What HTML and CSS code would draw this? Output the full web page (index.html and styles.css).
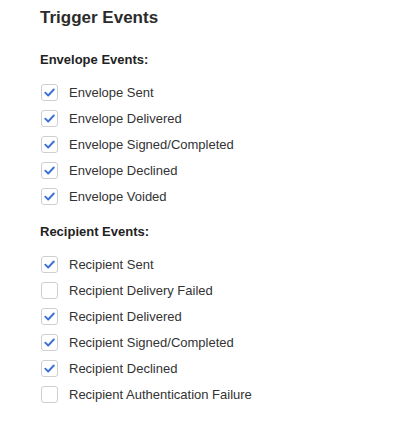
FILE: index.html
```html
<!DOCTYPE html>
<html lang="en">
<head>
  <meta charset="UTF-8" />
  <meta name="viewport" content="width=device-width, initial-scale=1.0" />
  <title>Trigger Events</title>
  <link rel="stylesheet" href="styles.css">
</head>
<body>
  <div class="panel">
    <h2 class="title">Trigger Events</h2>

    <p class="group-label">Envelope Events:</p>
    <ul class="events">
      <li class="event checked"><span class="box"><svg viewBox="0 0 16 16"><path d="M3.5 8.2 L6.6 11.2 L12.6 4.8" /></svg></span>Envelope Sent</li>
      <li class="event checked"><span class="box"><svg viewBox="0 0 16 16"><path d="M3.5 8.2 L6.6 11.2 L12.6 4.8" /></svg></span>Envelope Delivered</li>
      <li class="event checked"><span class="box"><svg viewBox="0 0 16 16"><path d="M3.5 8.2 L6.6 11.2 L12.6 4.8" /></svg></span>Envelope Signed/Completed</li>
      <li class="event checked"><span class="box"><svg viewBox="0 0 16 16"><path d="M3.5 8.2 L6.6 11.2 L12.6 4.8" /></svg></span>Envelope Declined</li>
      <li class="event checked"><span class="box"><svg viewBox="0 0 16 16"><path d="M3.5 8.2 L6.6 11.2 L12.6 4.8" /></svg></span>Envelope Voided</li>
    </ul>

    <p class="group-label second">Recipient Events:</p>
    <ul class="events">
      <li class="event checked"><span class="box"><svg viewBox="0 0 16 16"><path d="M3.5 8.2 L6.6 11.2 L12.6 4.8" /></svg></span>Recipient Sent</li>
      <li class="event"><span class="box"></span>Recipient Delivery Failed</li>
      <li class="event checked"><span class="box"><svg viewBox="0 0 16 16"><path d="M3.5 8.2 L6.6 11.2 L12.6 4.8" /></svg></span>Recipient Delivered</li>
      <li class="event checked"><span class="box"><svg viewBox="0 0 16 16"><path d="M3.5 8.2 L6.6 11.2 L12.6 4.8" /></svg></span>Recipient Signed/Completed</li>
      <li class="event checked"><span class="box"><svg viewBox="0 0 16 16"><path d="M3.5 8.2 L6.6 11.2 L12.6 4.8" /></svg></span>Recipient Declined</li>
      <li class="event"><span class="box"></span>Recipient Authentication Failure</li>
    </ul>
  </div>
</body>
</html>
```

FILE: styles.css
```css
body {
  margin: 0;
  background: #fff;
  font-family: "Liberation Sans", Arial, sans-serif;
  color: #333;
}

.panel {
  padding: 8px 40px;
}

.title {
  margin: 0;
  font-size: 17px;
  line-height: 20px;
  font-weight: bold;
  color: #2b2b2b;
}

.group-label {
  margin: 24px 0 0;
  font-size: 13px;
  line-height: 16px;
  font-weight: bold;
  color: #222;
}

.group-label.second {
  margin-top: 15px;
}

.events {
  list-style: none;
  margin: 11px 0 0;
  padding: 0;
}

.event {
  display: flex;
  align-items: center;
  height: 26px;
  font-size: 13px;
  color: #333;
}

.box {
  box-sizing: border-box;
  width: 17px;
  height: 17px;
  margin-left: 1px;
  margin-right: 11px;
  border: 1px solid #cfcfcf;
  border-radius: 3px;
  background: #fff;
  display: flex;
  align-items: center;
  justify-content: center;
}

.box svg {
  width: 15px;
  height: 15px;
}

.box path {
  fill: none;
  stroke: #3b6fd9;
  stroke-width: 2;
  stroke-linecap: round;
  stroke-linejoin: round;
}
```
